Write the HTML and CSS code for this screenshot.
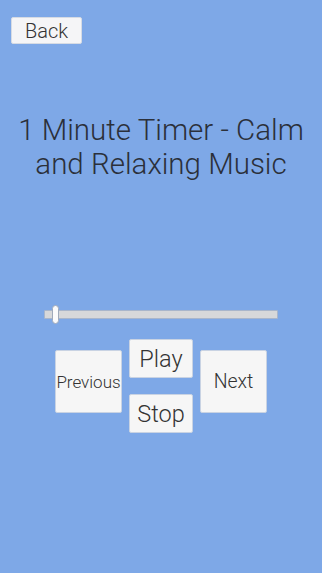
FILE: index.html
```html
<!DOCTYPE html>
<html lang="en">
<head>
    <meta charset="utf-8"/>
    <meta content="width=device-width, initial-scale=1.0" name="viewport"/>
    <title>Music Player</title>
    <link rel="stylesheet" href="styles.css">
</head>
<body>
    <div class="screen">
        <div class="header">
            <button class="back">Back</button>
        </div>
        <h1 class="title">1 Minute Timer - Calm and Relaxing Music</h1>
        <div class="slider">
            <div class="track"></div>
            <div class="thumb"></div>
        </div>
        <div class="controls">
            <button class="btn side small">Previous</button>
            <div class="middle">
                <button class="btn mid">Play</button>
                <button class="btn mid">Stop</button>
            </div>
            <button class="btn side">Next</button>
        </div>
    </div>
</body>
</html>
```

FILE: styles.css
```css
body {
    margin: 0;
    padding: 0;
    font-family: Roboto, "Noto Sans", sans-serif;
    background-color: #7ea8e7;
}
.screen {
    width: 322px;
    height: 573px;
    box-sizing: border-box;
    padding: 17px 0 0 0;
}
.header {
    padding-left: 11px;
    height: 27px;
}
.back {
    width: 71px;
    height: 27px;
    background-color: #f5f5f7;
    border: 1px solid #d6dbe4;
    border-radius: 2px;
    font-family: Roboto, sans-serif;
    font-weight: 300;
    font-size: 20px;
    color: #333;
    padding: 0;
}
.title {
    margin: 69px 0 0 0;
    padding: 0 10px;
    text-align: center;
    font-weight: 300;
    font-size: 29.5px;
    line-height: 34px;
    color: #2b303a;
}
.slider {
    position: relative;
    margin: 124px 0 0 44px;
    width: 234px;
    height: 19px;
}
.track {
    position: absolute;
    left: 0;
    right: 0;
    top: 5px;
    height: 9px;
    background-color: #d7d8da;
    border: 1px solid #a9b6cb;
    box-sizing: border-box;
    border-radius: 1px;
}
.thumb {
    position: absolute;
    left: 8px;
    top: 0;
    width: 7px;
    height: 19px;
    background-color: #fbfbfc;
    border: 1px solid #a0aabb;
    box-sizing: border-box;
    border-radius: 4px;
}
.controls {
    display: flex;
    align-items: flex-start;
    gap: 7px;
    margin: 15px 0 0 55px;
}
.middle {
    display: flex;
    flex-direction: column;
    gap: 16px;
}
.btn {
    background-color: #f6f6f6;
    border: 1px solid #c9d3e3;
    border-radius: 2px;
    font-family: Roboto, sans-serif;
    font-weight: 300;
    color: #333;
    padding: 0;
}
.side {
    width: 67px;
    height: 63px;
    margin-top: 11px;
    font-size: 19.5px;
}
.side.small {
    font-size: 17px;
}
.mid {
    width: 64px;
    height: 39px;
    font-size: 23.5px;
}
```
